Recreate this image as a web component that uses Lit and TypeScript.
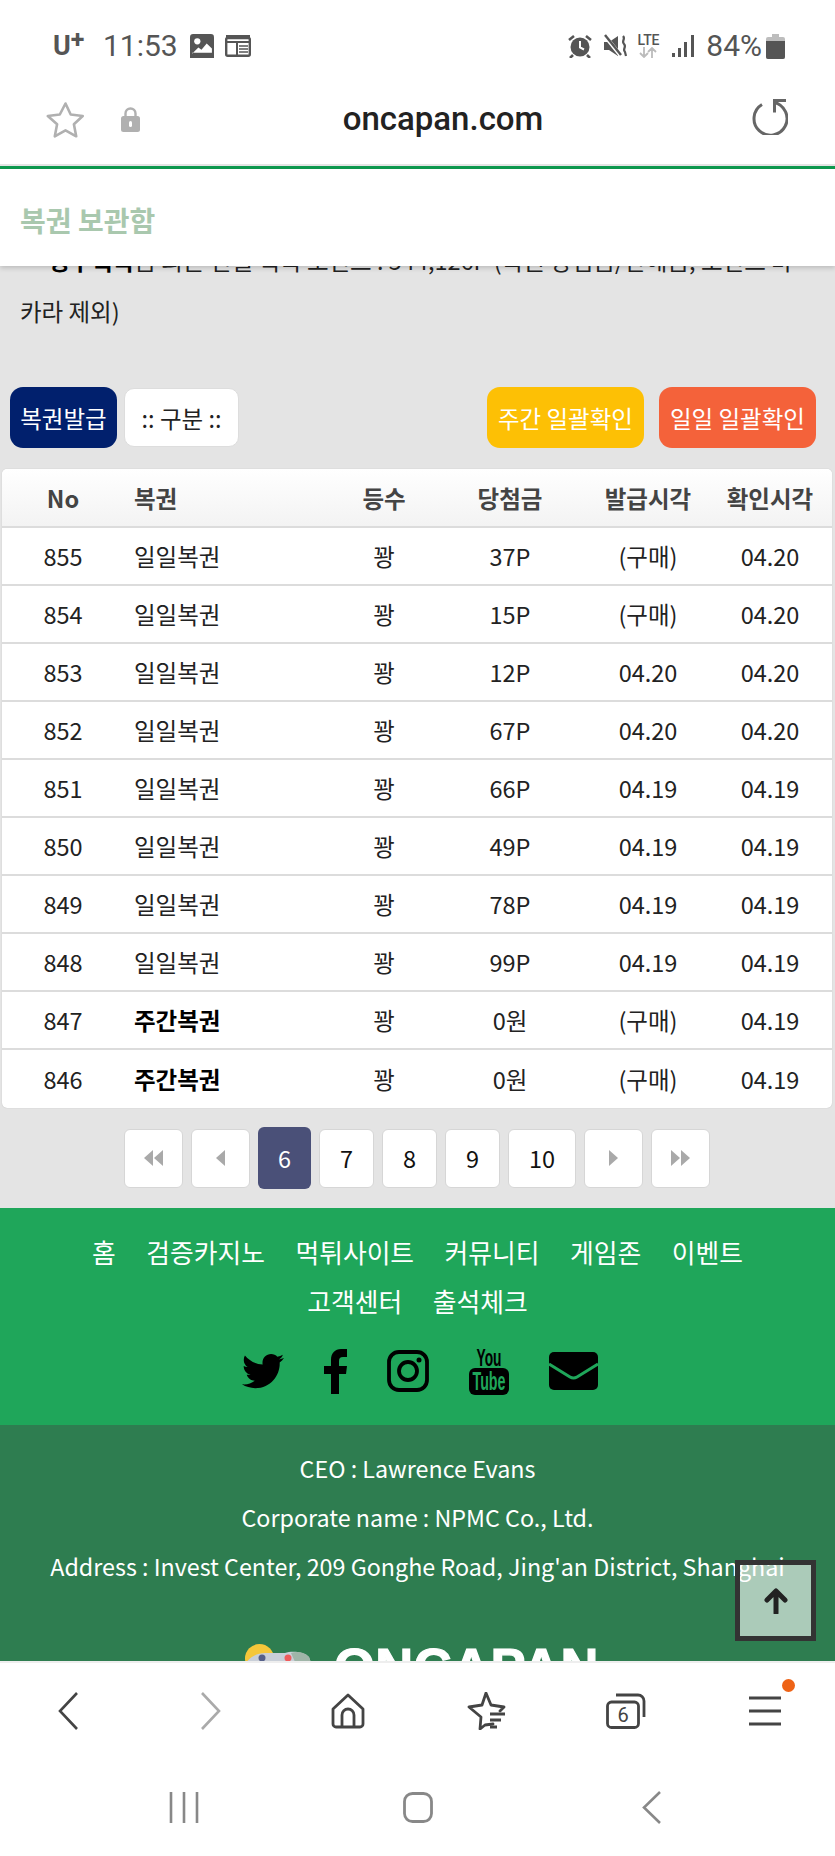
import { LitElement, html, css, svg } from "lit";
import { customElement } from "lit/decorators.js";

const rows = [
  ["855", "일일복권", "꽝", "37P", "(구매)", "04.20"],
  ["854", "일일복권", "꽝", "15P", "(구매)", "04.20"],
  ["853", "일일복권", "꽝", "12P", "04.20", "04.20"],
  ["852", "일일복권", "꽝", "67P", "04.20", "04.20"],
  ["851", "일일복권", "꽝", "66P", "04.19", "04.19"],
  ["850", "일일복권", "꽝", "49P", "04.19", "04.19"],
  ["849", "일일복권", "꽝", "78P", "04.19", "04.19"],
  ["848", "일일복권", "꽝", "99P", "04.19", "04.19"],
  ["847", "주간복권", "꽝", "0원", "(구매)", "04.19"],
  ["846", "주간복권", "꽝", "0원", "(구매)", "04.19"],
];

const tri = (d: string) => svg`<path d=${d} fill="#a9a9a9"/>`;

@customElement("app-root")
export class AppRoot extends LitElement {
  static styles = css`
    :host {
      display: flex;
      flex-direction: column;
      width: 835px;
      height: 1856px;
      overflow: hidden;
      background: #fff;
      font-family: "Noto Sans CJK KR", "Noto Sans", sans-serif;
      color: #222;
    }
    svg { display: block; flex: none; }

    /* status bar */
    .status {
      height: 75px;
      box-sizing: border-box;
      padding: 33px 50px 0 53px;
      display: flex;
      align-items: flex-start;
      justify-content: space-between;
      font-family: Roboto, sans-serif;
      color: #555;
    }
    .s-left, .s-right { display: flex; align-items: center; height: 26px; }
    .carrier { font-weight: 700; font-size: 27px; line-height: 26px; width: 50px; display: flex; }
    .carrier sup { font-size: 25px; line-height: 14px; display: block; font-weight: 700; }
    .time { font-size: 30px; line-height: 26px; margin-right: 12px; }
    .s-left svg:last-child { margin-left: 11px; }
    .s-right { gap: 12px; }
    .batt-txt { font-size: 30px; line-height: 26px; }
    .s-right .batt { margin-left: -8px; }
    .lte { display: flex; flex-direction: column; align-items: center; width: 24px; margin-left: -4px; }
    .lte b { font-size: 14px; line-height: 13px; font-weight: 500; letter-spacing: -0.3px; }

    /* url bar */
    .url {
      height: 89px;
      display: flex;
      align-items: center;
      padding: 0 47px 0 46px;
      box-sizing: border-box;
    }
    .url .lock { margin-left: 36px; }
    .url .reload { margin-top: -5px; }
    .domain {
      flex: 1;
      text-align: center;
      font-family: Roboto, sans-serif;
      font-weight: 500;
      font-size: 33px;
      color: #222;
      margin-right: 5px;
      margin-top: -2px;
    }
    .rule {
      height: 5px;
      box-sizing: border-box;
      background: #0e9a4f;
      border-top: 2px solid #e4e4e4;
    }
    .title {
      height: 97px;
      background: #fff;
      box-sizing: border-box;
      padding: 4px 20px 0;
      display: flex;
      align-items: center;
      font-size: 28px;
      font-weight: 700;
      color: #a9c8ae;
      box-shadow: 0 2px 5px rgba(0, 0, 0, 0.18);
      position: relative;
      z-index: 2;
    }

    /* page */
    .page {
      flex: 1;
      min-height: 0;
      overflow: hidden;
      background: #e4e4e4;
      position: relative;
    }
    .notice {
      margin: -31px 30px 0 20px;
      font-size: 23.5px;
      line-height: 51px;
      color: #222;
      text-indent: 28px;
    }
    .notice b { font-weight: 700; color: #000; }
    .actions {
      margin-top: 50px;
      padding: 0 19px 0 10px;
      display: flex;
      align-items: center;
      gap: 7px;
    }
    .btn {
      height: 61px;
      box-sizing: border-box;
      border-radius: 13px;
      display: flex;
      align-items: center;
      justify-content: center;
      font-size: 23.5px;
      color: #fff;
    }
    .navy { width: 107px; background: #01206d; }
    .plain { width: 115px; height: 59px; background: #fff; color: #222; border: 1px solid #ddd; border-radius: 10px; }
    .yellow { width: 157px; background: #fdc005; margin-left: auto; }
    .orange { width: 157px; background: #f4623a; margin-left: 8px; }

    .table {
      margin: 21px 3px 0 2px;
      background: #fff;
      border-radius: 5px;
      overflow: hidden;
      box-shadow: 0 0 1px rgba(0, 0, 0, 0.25);
    }
    .tr {
      display: grid;
      grid-template-columns: 122px 212px 96px 156px 120px 124px;
      height: 58px;
      box-sizing: border-box;
      align-items: center;
      border-bottom: 2px solid #dcdcdc;
      font-size: 23.5px;
      text-align: center;
      color: #222;
    }
    .tr:last-child { border-bottom: none; }
    .tr .name { text-align: left; padding-left: 10px; }
    .tr .name.bold { font-weight: 700; color: #000; }
    .tr.head {
      height: 59px;
      background: linear-gradient(#fff, #f3f3f3);
      font-weight: 700;
      color: #444;
    }

    .pager {
      margin-top: 19px;
      height: 62px;
      display: flex;
      align-items: center;
      justify-content: center;
      gap: 8px;
      padding-right: 1px;
    }
    .pg {
      height: 59px;
      box-sizing: border-box;
      background: #fff;
      border: 1px solid #d6d6d6;
      border-radius: 6px;
      display: flex;
      align-items: center;
      justify-content: center;
      font-size: 23.5px;
      color: #111;
    }
    .pg.arrow { width: 59px; }
    .pg.num { width: 55px; }
    .pg.wide { width: 68px; }
    .pg.cur { width: 53px; height: 62px; background: #4a5078; color: #fff; border: none; }

    .links {
      margin-top: 19px;
      height: 217px;
      box-sizing: border-box;
      background: #1fa65a;
      padding-top: 19px;
      display: flex;
      flex-direction: column;
      align-items: center;
    }
    .nav {
      display: flex;
      flex-wrap: wrap;
      justify-content: center;
      column-gap: 30.5px;
      width: 720px;
      font-size: 25.8px;
      line-height: 49px;
      color: #fff;
    }
    .social {
      margin: 22px 0 0 4px;
      display: flex;
      align-items: center;
      gap: 40px;
    }
    .corp {
      background: #2e7d50;
      padding-top: 19px;
      height: 240px;
      box-sizing: border-box;
      text-align: center;
      color: #fff;
      font-size: 23.3px;
      line-height: 49px;
    }
    .logo {
      margin-top: 58px;
      display: flex;
      align-items: flex-start;
      justify-content: center;
      gap: 17px;
      padding-left: 3px;
    }
    .logo svg { margin-top: -5px; }
    .logo span {
      font-family: "Liberation Sans", sans-serif;
      font-weight: 700;
      font-size: 52.5px;
      line-height: 36px;
      letter-spacing: 0.5px;
      -webkit-text-stroke: 1.2px #fff;
    }
    .top {
      position: absolute;
      right: 19px;
      top: 1294px;
      width: 81px;
      height: 81px;
      box-sizing: border-box;
      border: 5px solid #333;
      background: rgba(255, 255, 255, 0.6);
      display: flex;
      align-items: center;
      justify-content: center;
    }

    /* browser bar */
    .bbar {
      height: 98px;
      flex: none;
      display: grid;
      grid-template-columns: repeat(6, 1fr);
      align-items: center;
      justify-items: center;
      background: #fff;
      border-top: 2px solid #eee;
      box-sizing: border-box;
    }
    .bbar .back { margin-right: 4px; }
    .bbar .fwd { margin-left: 4px; }
    .menu { position: relative; }
    .dot {
      position: absolute;
      right: -14px;
      top: -17px;
      width: 13px;
      height: 13px;
      border-radius: 50%;
      background: #ee6316;
    }
    .sys {
      height: 97px;
      flex: none;
      display: grid;
      grid-template-columns: repeat(3, 234px);
      justify-content: center;
      justify-items: center;
      align-items: center;
      background: #fff;
    }
  `;

  render() {
    return html`
      <div class="status">
        <div class="s-left">
          <div class="carrier">U<sup>+</sup></div>
          <span class="time">11:53</span>
          <svg width="24" height="24" viewBox="0 0 23 23">
            <rect width="23" height="23" rx="3" fill="#555"/>
            <circle cx="7" cy="7" r="3" fill="#fff"/>
            <path d="M2 19l6-6 3 2 5-6 5 5v4H2z" fill="#fff"/>
            <rect x="0" y="20" width="23" height="3" fill="#555"/>
          </svg>
          <svg width="26" height="22" viewBox="0 0 26 22">
            <path d="M1 0h24v3H1z" fill="#555"/>
            <rect x="1.2" y="3" width="23.6" height="17.8" rx="1.5" fill="none" stroke="#555" stroke-width="2.4"/>
            <path d="M1 7h24" stroke="#555" stroke-width="2"/>
            <path d="M12 8v12" stroke="#555" stroke-width="2"/>
            <path d="M14 11h9M14 14h9M14 17h9" stroke="#555" stroke-width="1.6"/>
          </svg>
        </div>
        <div class="s-right">
          <svg width="24" height="24" viewBox="0 0 24 24">
            <circle cx="12" cy="13" r="9.5" fill="#555"/>
            <path d="M12 7v6.5l4 2" fill="none" stroke="#fff" stroke-width="2"/>
            <path d="M1 6l5-4M23 6l-5-4M5 21l-3 3M19 21l3 3" stroke="#555" stroke-width="2.6"/>
          </svg>
          <svg width="24" height="24" viewBox="0 0 24 24">
            <path d="M0 8h5l9-6v20l-9-6H0z" fill="#555"/>
            <path d="M1 2l16 20" stroke="#fff" stroke-width="4"/>
            <path d="M1 1l16 20" stroke="#555" stroke-width="2.4"/>
            <path d="M19 2c3 3-2 5 1 8s-2 5 1 8l1 4" fill="none" stroke="#555" stroke-width="2.2"/>
          </svg>
          <div class="lte">
            <b>LTE</b>
            <svg width="18" height="11" viewBox="0 0 18 11">
              <path d="M5 0v10M1 6l4 4 4-4M13 11V1M9 5l4-4 4 4" fill="none" stroke="#bbb" stroke-width="1.8"/>
            </svg>
          </div>
          <svg width="22" height="22" viewBox="0 0 22 22">
            <rect x="0" y="18" width="3" height="4" fill="#555"/>
            <rect x="6" y="13" width="3" height="9" fill="#555"/>
            <rect x="12" y="7" width="3" height="15" fill="#555"/>
            <rect x="19" y="0" width="3" height="22" fill="#555"/>
          </svg>
          <span class="batt-txt">84%</span>
          <svg class="batt" width="19" height="25" viewBox="0 0 19 25">
            <path d="M6 0h7v3h4a2 2 0 0 1 2 2v18a2 2 0 0 1-2 2H2a2 2 0 0 1-2-2V5a2 2 0 0 1 2-2h4z" fill="#bdbdbd"/>
            <path d="M0 7h19v16a2 2 0 0 1-2 2H2a2 2 0 0 1-2-2z" fill="#555"/>
          </svg>
        </div>
      </div>

      <div class="url">
        <svg width="39" height="38" viewBox="0 0 39 38">
          <path d="M19.5 2.5l5.2 11 12 1.5-8.8 8.300 2.300 12-10.700-5.900-10.700 5.900 2.300-12L1.800 15l12-1.500z" fill="none" stroke="#b0b0b0" stroke-width="2.600" stroke-linejoin="round"/>
        </svg>
        <svg class="lock" width="19" height="25" viewBox="0 0 19 25">
          <path d="M4.500 11V6.500a5 5 0 0 1 10 0V11" fill="none" stroke="#b0b0b0" stroke-width="2.400"/>
          <rect y="9" width="19" height="16" rx="2.500" fill="#b0b0b0"/>
          <rect x="8" y="14" width="3" height="6" rx="1.500" fill="#fff"/>
        </svg>
        <div class="domain">oncapan.com</div>
        <svg class="reload" width="37" height="36" viewBox="0 0 37 36">
          <path d="M11 5.500a16.500 16.500 0 1 0 12-2" fill="none" stroke="#666" stroke-width="3"/>
          <path d="M22 1.500h13M23.500 1.500v12" fill="none" stroke="#666" stroke-width="3"/>
        </svg>
      </div>
      <div class="rule"></div>
      <div class="title">복권 보관함</div>

      <div class="page">
        <p class="notice"><b>영구획득</b>금 외는 전월 획득 포인트 : 544,126P (복권 당첨금/잔해금, 포인트 바카라 제외)</p>
        <div class="actions">
          <div class="btn navy">복권발급</div>
          <div class="btn plain">:: 구분 ::</div>
          <div class="btn yellow">주간 일괄확인</div>
          <div class="btn orange">일일 일괄확인</div>
        </div>

        <div class="table">
          <div class="tr head">
            <span>No</span><span class="name">복권</span><span>등수</span><span>당첨금</span><span>발급시각</span><span>확인시각</span>
          </div>
          ${rows.map(
            (r) => html`<div class="tr">
              <span>${r[0]}</span>
              <span class="name ${r[1] === "주간복권" ? "bold" : ""}">${r[1]}</span>
              <span>${r[2]}</span><span>${r[3]}</span><span>${r[4]}</span><span>${r[5]}</span>
            </div>`
          )}
        </div>

        <div class="pager">
          <div class="pg arrow"><svg width="20" height="16" viewBox="0 0 20 16">${tri("M9 0v16L0 8zM19 0v16l-9-8z")}</svg></div>
          <div class="pg arrow"><svg width="9" height="16" viewBox="0 0 9 16">${tri("M9 0v16L0 8z")}</svg></div>
          <div class="pg cur">6</div>
          <div class="pg num">7</div>
          <div class="pg num">8</div>
          <div class="pg num">9</div>
          <div class="pg wide">10</div>
          <div class="pg arrow"><svg width="9" height="16" viewBox="0 0 9 16">${tri("M0 0v16l9-8z")}</svg></div>
          <div class="pg arrow"><svg width="20" height="16" viewBox="0 0 20 16">${tri("M0 0v16l9-8zM10 0v16l9-8z")}</svg></div>
        </div>

        <div class="links">
          <div class="nav">
            <span>홈</span><span>검증카지노</span><span>먹튀사이트</span><span>커뮤니티</span><span>게임존</span><span>이벤트</span><span>고객센터</span><span>출석체크</span>
          </div>
          <div class="social">
            <svg width="42" height="36" viewBox="0 40 512 430">
              <path d="M459.37 151.716c.325 4.548.325 9.097.325 13.645 0 138.72-105.583 298.558-298.558 298.558-59.452 0-114.68-17.219-161.137-47.106 8.447.974 16.568 1.299 25.34 1.299 49.055 0 94.213-16.568 130.274-44.832-46.132-.975-84.792-31.188-98.112-72.772 6.498.974 12.995 1.624 19.818 1.624 9.421 0 18.843-1.3 27.614-3.573-48.081-9.747-84.143-51.98-84.143-102.985v-1.299c13.969 7.797 30.214 12.67 47.431 13.319-28.264-18.843-46.781-51.005-46.781-87.391 0-19.492 5.197-37.36 14.294-52.954 51.655 63.675 129.3 105.258 216.365 109.807-1.624-7.797-2.599-15.918-2.599-24.04 0-57.828 46.782-104.934 104.934-104.934 30.213 0 57.502 12.67 76.67 33.137 23.715-4.548 46.456-13.32 66.599-25.34-7.798 24.366-24.366 44.833-46.132 57.827 21.117-2.273 41.584-8.122 60.426-16.243-14.292 20.791-32.161 39.308-52.628 54.253z" fill="#000"/>
            </svg>
            <svg width="23" height="45" viewBox="0 0 23 45">
              <path d="M7 45V25H0v-8h7v-6C7 4 11 0 17 0h6v8h-4c-3 0-4 1.500-4 4v5h8l-1 8h-7v20z" fill="#000"/>
            </svg>
            <svg width="42" height="42" viewBox="0 0 42 42">
              <rect x="2" y="2" width="38" height="38" rx="10" fill="none" stroke="#000" stroke-width="3.800"/>
              <circle cx="21" cy="21" r="9" fill="none" stroke="#000" stroke-width="3.800"/>
              <circle cx="32" cy="10" r="2.500" fill="#000"/>
            </svg>
            <svg width="40" height="48" viewBox="0 0 40 48">
              <text x="20" y="19" text-anchor="middle" textLength="25" lengthAdjust="spacingAndGlyphs" font-family="Liberation Sans" font-weight="700" font-size="23" fill="#000">You</text>
              <rect x="0" y="21" width="40" height="27" rx="6" fill="#000"/>
              <text x="20" y="43" text-anchor="middle" textLength="33" lengthAdjust="spacingAndGlyphs" font-family="Liberation Sans" font-weight="700" font-size="25" fill="#1fa65a">Tube</text>
            </svg>
            <svg width="49" height="38" viewBox="0 0 49 38">
              <rect width="49" height="38" rx="5" fill="#000"/>
              <path d="M0 12l21 13c2 1.200 5 1.200 7 0l21-13" fill="none" stroke="#1fa65a" stroke-width="3"/>
            </svg>
          </div>
        </div>

        <div class="corp">
          <div>CEO : Lawrence Evans</div>
          <div>Corporate name : NPMC Co., Ltd.</div>
          <div>Address : Invest Center, 209 Gonghe Road, Jing'an District, Shanghai</div>
          <div class="logo">
            <svg width="78" height="36" viewBox="0 0 78 36">
              <circle cx="20.500" cy="14.500" r="14.500" fill="#f5c73a"/>
              <path d="M0 36C3 18 14 9 26 9h20c6-2 18-2 24 4l8 23z" fill="#c9cfd8"/>
              <path d="M52 9c6-2 14-1 18 4l8 23H64z" fill="#9fb5a8"/>
              <circle cx="23" cy="14" r="3.500" fill="#55608a"/>
              <circle cx="49" cy="14" r="3.500" fill="#ef5b5b"/>
            </svg>
            <span>ONCAPAN</span>
          </div>
        </div>

        <div class="top">
          <svg width="24" height="26" viewBox="0 0 24 26">
            <path d="M12 25V4M3 12l9-9 9 9" fill="none" stroke="#222" stroke-width="5" stroke-linejoin="round" stroke-linecap="round"/>
          </svg>
        </div>
      </div>

      <div class="bbar">
        <svg class="back" width="20" height="38" viewBox="0 0 20 38"><path d="M19 1L2 19l17 18" fill="none" stroke="#444" stroke-width="2.600"/></svg>
        <svg class="fwd" width="20" height="38" viewBox="0 0 20 38"><path d="M1 1l17 18L1 37" fill="none" stroke="#aaa" stroke-width="2.600"/></svg>
        <svg width="36" height="36" viewBox="0 0 36 36">
          <path d="M18 2L3 16v15a3 3 0 0 0 3 3h24a3 3 0 0 0 3-3V16z" fill="none" stroke="#444" stroke-width="2.800" stroke-linejoin="round"/>
          <path d="M12 34V22a6 6 0 0 1 12 0v12" fill="none" stroke="#444" stroke-width="2.800"/>
        </svg>
        <svg width="40" height="38" viewBox="0 0 40 38">
          <path d="M26 32l-8 1-5 4 1-12L2 15l13-2L19 1l5 12 13 2-4 4" fill="none" stroke="#444" stroke-width="2.800" stroke-linejoin="round" stroke-linecap="round"/>
          <path d="M23 22h15M23 28h11M23 35h7" stroke="#444" stroke-width="2.800"/>
        </svg>
        <svg width="40" height="36" viewBox="0 0 40 36">
          <rect x="1.500" y="9" width="31" height="25.500" rx="4" fill="none" stroke="#444" stroke-width="2.800"/>
          <path d="M10 2h22a6 6 0 0 1 6 6v16" fill="none" stroke="#444" stroke-width="2.800"/>
          <text x="17" y="29" text-anchor="middle" font-family="Roboto" font-size="20" fill="#444">6</text>
        </svg>
        <div class="menu">
          <svg width="32" height="30" viewBox="0 0 32 30"><path d="M0 2h32M0 15h32M0 28h32" stroke="#444" stroke-width="3"/></svg>
          <span class="dot"></span>
        </div>
      </div>
      <div class="sys">
        <svg width="30" height="31" viewBox="0 0 30 31"><path d="M2 0v31M15 0v31M28 0v31" stroke="#888" stroke-width="2.600"/></svg>
        <svg width="30" height="31" viewBox="0 0 30 31"><rect x="1.500" y="1.500" width="27" height="28" rx="8" fill="none" stroke="#888" stroke-width="2.800"/></svg>
        <svg width="19" height="33" viewBox="0 0 19 33"><path d="M18 1L2 16.500 18 32" fill="none" stroke="#888" stroke-width="2.600"/></svg>
      </div>
    `;
  }
}
